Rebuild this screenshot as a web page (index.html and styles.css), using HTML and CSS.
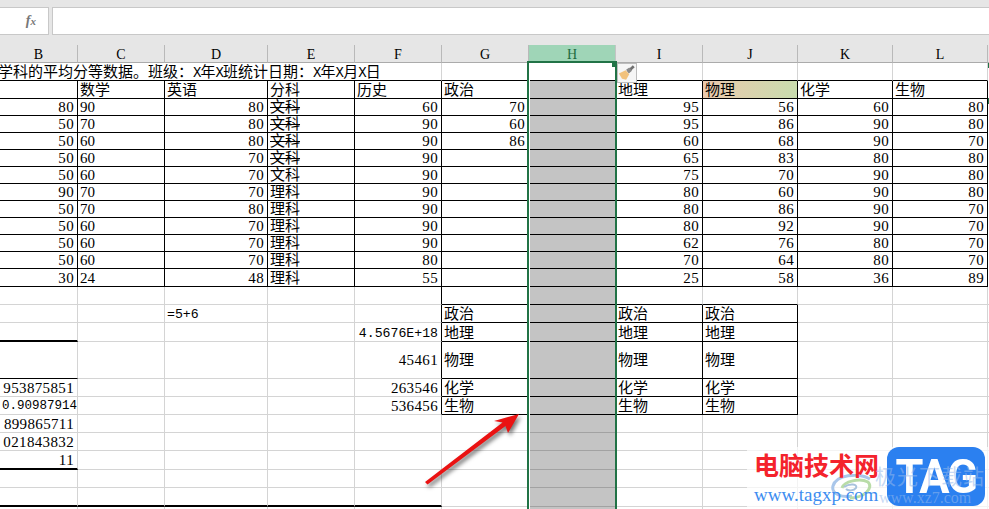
FILE: index.html
```html
<!DOCTYPE html>
<html lang="zh-CN">
<head>
<meta charset="utf-8">
<title>表格</title>
<link rel="stylesheet" href="styles.css">
</head>
<body>
<div class="app">
  <div class="formula-bar">
    <div class="fx-box"><span class="fx">f<span class="fx-x">x</span></span></div>
    <div class="formula-input"></div>
  </div>
  <div class="sheet">
    <table class="grid">
      <colgroup>
        <col class="c78"><col class="c87"><col class="c103"><col class="c87"><col class="c87"><col class="c87"><col class="c87"><col class="c87"><col class="c95"><col class="c95"><col class="c95"><col class="c100">
      </colgroup>
      <thead>
        <tr><th>B</th><th>C</th><th>D</th><th>E</th><th>F</th><th>G</th><th class="on">H</th><th>I</th><th>J</th><th>K</th><th>L</th><th></th></tr>
      </thead>
      <tbody>
        <tr class="h18"><td colspan="5" class="title kb">学科的平均分等数据。班级：<span class="lat">X</span>年<span class="lat">X</span>班统计日期：<span class="lat">X</span>年<span class="lat">X</span>月<span class="lat">X</span>日</td><td class="kb"></td><td class="kb active"></td><td class="kb"></td><td class="kb"></td><td class="kb"></td><td class="kb"></td><td class="end"></td></tr>
        <tr class="h18 rd"><td></td><td>数学</td><td>英语</td><td>分科</td><td>历史</td><td>政治</td><td class="sel"></td><td>地理</td><td class="grad">物理</td><td>化学</td><td>生物</td><td class="end"></td></tr>
        <tr class="h17 rd"><td class="n">80</td><td>90</td><td class="n">80</td><td class="s">文科</td><td class="n">60</td><td class="n">70</td><td class="sel"></td><td class="n">95</td><td class="n">56</td><td class="n">60</td><td class="n">80</td><td class="end"></td></tr>
        <tr class="h17 rd"><td class="n">50</td><td>70</td><td class="n">80</td><td class="s">文科</td><td class="n">90</td><td class="n">60</td><td class="sel"></td><td class="n">95</td><td class="n">86</td><td class="n">90</td><td class="n">80</td><td class="end"></td></tr>
        <tr class="h17 rd"><td class="n">50</td><td>60</td><td class="n">80</td><td class="s">文科</td><td class="n">90</td><td class="n">86</td><td class="sel"></td><td class="n">60</td><td class="n">68</td><td class="n">90</td><td class="n">70</td><td class="end"></td></tr>
        <tr class="h17 rd"><td class="n">50</td><td>60</td><td class="n">70</td><td class="s">文科</td><td class="n">90</td><td></td><td class="sel"></td><td class="n">65</td><td class="n">83</td><td class="n">80</td><td class="n">80</td><td class="end"></td></tr>
        <tr class="h17 rd"><td class="n">50</td><td>60</td><td class="n">70</td><td>文科</td><td class="n">90</td><td></td><td class="sel"></td><td class="n">75</td><td class="n">70</td><td class="n">90</td><td class="n">80</td><td class="end"></td></tr>
        <tr class="h17 rd"><td class="n">90</td><td>70</td><td class="n">70</td><td>理科</td><td class="n">90</td><td></td><td class="sel"></td><td class="n">80</td><td class="n">60</td><td class="n">90</td><td class="n">80</td><td class="end"></td></tr>
        <tr class="h17 rd"><td class="n">50</td><td>70</td><td class="n">80</td><td>理科</td><td class="n">90</td><td></td><td class="sel"></td><td class="n">80</td><td class="n">86</td><td class="n">90</td><td class="n">70</td><td class="end"></td></tr>
        <tr class="h17 rd"><td class="n">50</td><td>60</td><td class="n">70</td><td>理科</td><td class="n">90</td><td></td><td class="sel"></td><td class="n">80</td><td class="n">92</td><td class="n">90</td><td class="n">70</td><td class="end"></td></tr>
        <tr class="h17 rd"><td class="n">50</td><td>60</td><td class="n">70</td><td>理科</td><td class="n">90</td><td></td><td class="sel"></td><td class="n">62</td><td class="n">76</td><td class="n">80</td><td class="n">70</td><td class="end"></td></tr>
        <tr class="h17 rd"><td class="n">50</td><td>60</td><td class="n">70</td><td>理科</td><td class="n">80</td><td></td><td class="sel"></td><td class="n">70</td><td class="n">64</td><td class="n">80</td><td class="n">70</td><td class="end"></td></tr>
        <tr class="h18 rd"><td class="n">30</td><td>24</td><td class="n">48</td><td>理科</td><td class="n">55</td><td></td><td class="sel"></td><td class="n">25</td><td class="n">58</td><td class="n">36</td><td class="n">89</td><td class="end"></td></tr>
        <tr class="h18"><td></td><td></td><td></td><td></td><td class="kr"></td><td class="kb kr"></td><td class="sel kb"></td><td class="kb"></td><td class="kb"></td><td></td><td></td><td></td></tr>
        <tr class="h18"><td></td><td></td><td class="m">=5+6</td><td></td><td class="kr"></td><td class="k">政治</td><td class="sel kb"></td><td class="k">政治</td><td class="k">政治</td><td></td><td></td><td></td></tr>
        <tr class="h19"><td class="thick"></td><td></td><td></td><td></td><td class="kr n m">4.5676E+18</td><td class="k">地理</td><td class="sel kb"></td><td class="k">地理</td><td class="k">地理</td><td></td><td></td><td></td></tr>
        <tr class="h37"><td class="kb"></td><td></td><td></td><td></td><td class="kr n">45461</td><td class="k">物理</td><td class="sel kb"></td><td class="k">物理</td><td class="k">物理</td><td></td><td></td><td></td></tr>
        <tr class="h18"><td class="n">953875851</td><td></td><td></td><td></td><td class="kr n">263546</td><td class="k">化学</td><td class="sel kb"></td><td class="k">化学</td><td class="k">化学</td><td></td><td></td><td></td></tr>
        <tr class="h18"><td class="n m tight">0.90987914</td><td></td><td></td><td></td><td class="kr n">536456</td><td class="k">生物</td><td class="sel kb"></td><td class="k">生物</td><td class="k">生物</td><td></td><td></td><td></td></tr>
        <tr class="h18"><td class="n">899865711</td><td></td><td></td><td></td><td></td><td></td><td class="sel"></td><td></td><td></td><td></td><td></td><td></td></tr>
        <tr class="h18"><td class="n">021843832</td><td></td><td></td><td></td><td></td><td></td><td class="sel"></td><td></td><td></td><td></td><td></td><td></td></tr>
        <tr class="h19"><td class="n thick">11</td><td></td><td></td><td></td><td></td><td></td><td class="sel"></td><td></td><td></td><td></td><td></td><td></td></tr>
        <tr class="h18"><td></td><td></td><td></td><td></td><td></td><td></td><td class="sel"></td><td></td><td></td><td></td><td></td><td></td></tr>
        <tr class="h19"><td class="thick"></td><td class="thick"></td><td class="thick"></td><td class="thick"></td><td class="thick"></td><td></td><td class="sel"></td><td></td><td></td><td></td><td></td><td></td></tr>
        <tr class="h18"><td></td><td></td><td></td><td></td><td></td><td></td><td class="sel"></td><td></td><td></td><td></td><td></td><td></td></tr>
      </tbody>
    </table>

    <div class="selection"><span class="handle"></span></div>
    <span class="tick tick-a"></span>
    <span class="tick tick-b"></span>

    <div class="paint-tag">
      <svg viewBox="0 0 20 20" width="18" height="18">
        <path class="brush-handle" d="M17.5 2.5 L11 8.5"/>
        <path class="brush-neck" d="M9 6.5 L12.5 3.8 L15.5 7.5 L12 10.5 Z"/>
        <path class="brush-head" d="M1 10.5 L8.5 7 L12.5 11.5 L9 17.5 L4.5 16.5 Z"/>
      </svg>
    </div>

    <svg class="arrow" viewBox="0 0 100 80" width="100" height="80">
      <path class="arrow-fill" d="M3.5 70.5 L1 68 L78.5 8.5 L70 7 L95 0 L84 19 L81.5 12 Z"/>
    </svg>

    <div class="watermark">
      <div class="wm-faint">极光下载站</div>
      <div class="wm-faint-url">www.xz7.com</div>
      <svg class="wm-swirl" viewBox="0 0 44 26" width="44" height="26">
        <path class="swirl-a" d="M40 5 C28 -2 6 1 3 12 C1 20 12 24 22 22"/>
        <path class="swirl-b" d="M12 14 C14 7 30 4 38 8 C44 14 34 24 20 24"/>
        <path class="swirl-c" d="M14 13 C20 9 28 10 26 14 C24 17 18 17 16 15"/>
      </svg>
      <div class="wm-text">
        <div class="wm-cn">电脑技术网</div>
        <div class="wm-url">www.tagxp.com</div>
      </div>
      <div class="wm-badge"><span class="wm-tag">TAG</span></div>
    </div>
  </div>
</div>
</body>
</html>
```
FILE: styles.css
```css
* { box-sizing: border-box; }
html, body { margin: 0; padding: 0; height: 100%; }
body { background: #e6e6e6; overflow: hidden; }
.app { width: 989px; height: 509px; display: flex; flex-direction: column; overflow: hidden; font-family: "Liberation Serif", "Noto Sans CJK SC", serif; font-size: 15px; color: #000; }

.formula-bar { display: flex; gap: 3px; padding-top: 7px; height: 45px; flex: none; }
.fx-box, .formula-input { height: 28px; background: #fff; border: 1px solid #c8c8c8; }
.fx-box { width: 49px; border-left: 0; display: flex; align-items: center; justify-content: flex-end; padding-right: 12px; }
.formula-input { flex: 1; border-right: 0; }
.fx { font: italic bold 14px "Liberation Serif", serif; color: #777; }
.fx-x { font-size: 11px; }

.sheet { position: relative; flex: 1; overflow: hidden; background: #fff; }
.grid { border-collapse: separate; border-spacing: 0; table-layout: fixed; width: 1088px; }
.c78 { width: 78px; } .c87 { width: 87px; } .c103 { width: 103px; } .c95 { width: 95px; } .c100 { width: 100px; }

th { height: 18px; padding: 2px 0 0; background: #e6e6e6; border-right: 1px solid #b9b9b9; border-bottom: 1px solid #ababab; font-weight: 400; font-size: 14px; line-height: 15px; text-align: center; vertical-align: middle; }
th.on { background: #9fd5b7; color: #1d6b40; border-right-color: #c4c4c4; }

td { padding: 0 2px 0 2px; border-right: 1px solid #d4d4d4; border-bottom: 1px solid #d4d4d4; line-height: 15px; white-space: nowrap; overflow: hidden; vertical-align: bottom; background: #fff; }
tr.h17 td { height: 17px; }
tr.h18 td { height: 18px; }
tr.h19 td { height: 19px; }
tr.h37 td { height: 37px; vertical-align: middle; }

tr.rd td { border-color: #000; }
td.end, tr.rd td.end { border-color: transparent; }
td.k { border-color: #000; }
td.kb { border-bottom-color: #000; }
td.kr { border-right-color: #000; }
td.thick { border-bottom: 2px solid #000; }
td.n { text-align: right; padding-right: 3px; letter-spacing: .35px; }
td.m { font-family: "Liberation Mono", monospace; font-size: 13.2px; letter-spacing: 0; }
td.tight { padding-right: 1px; font-size: 12.5px; }
td.s { text-decoration: line-through; }
td.grad { background: linear-gradient(100deg, #ecc9ad, #c8dcae); }
td.title { padding: 0; text-indent: -2px; }
.lat { font-family: "Liberation Mono", monospace; font-size: 14px; line-height: 1; letter-spacing: -.9px; }

td.sel { background: #c4c4c4; border-bottom-color: #a2a2a2; }
td.sel.kb, tr.rd td.sel { border-bottom-color: #000; }
td.active { background: #fff; }

.selection { position: absolute; left: 527px; top: 16px; width: 90px; height: 460px; border: 2px solid #217346; box-shadow: inset 1px 0 0 #fff; pointer-events: none; }
.handle { position: absolute; right: -2px; top: -2px; width: 5px; height: 6px; background: #217346; }
.tick { position: absolute; left: 988px; width: 1px; background: #217346; }
.tick-a { top: 18px; height: 5px; }
.tick-b { top: 53px; height: 6px; }

.paint-tag { position: absolute; left: 617px; top: 18px; width: 20px; height: 20px; background: #f6f6f6; border: 1px solid #bdbdbd; display: flex; align-items: center; justify-content: center; }
.brush-handle { stroke: #707070; stroke-width: 3; fill: none; }
.brush-neck { fill: #8a8a8a; }
.brush-head { fill: #f2c27c; }

.arrow { position: absolute; left: 424px; top: 369px; overflow: visible; filter: drop-shadow(2px 3px 2px rgba(0, 0, 0, .55)); }
.arrow-fill { fill: #ea1212; }

.watermark { position: absolute; left: 747px; top: 402px; width: 242px; height: 62px; display: flex; align-items: flex-start; background: rgba(255, 255, 255, .72); }
.wm-text { margin-left: 7px; width: 133px; padding-top: 4px; position: relative; }
.wm-cn { font: 700 25px/27px "Noto Sans CJK SC", sans-serif; color: #f4232c; white-space: nowrap; }
.wm-url { margin-top: 7px; font: 400 19px/20px "Liberation Serif", serif; color: #3d8df0; white-space: nowrap; }
.wm-badge { position: relative; margin-left: 0; width: 98px; height: 59px; background: #2b80f0; border-radius: 12px; display: flex; align-items: center; justify-content: center; }
.wm-tag { font: 700 49px/1 Roboto, sans-serif; color: #fff; letter-spacing: -2px; transform: scaleX(.92); }
.wm-faint { position: absolute; left: 128px; top: 16px; font: 400 21px/24px "Noto Sans CJK SC", sans-serif; color: rgba(150, 185, 235, .55); white-space: nowrap; z-index: 1; letter-spacing: 1px; }
.wm-faint-url { position: absolute; left: 132px; top: 42px; font: 400 16px/18px "Liberation Serif", serif; color: rgba(150, 185, 235, .55); white-space: nowrap; z-index: 1; }
.wm-swirl { position: absolute; left: 83px; top: 27px; fill: none; }
.swirl-a { stroke: #a9c6ea; stroke-width: 3; }
.swirl-b { stroke: #b9dca8; stroke-width: 3; }
.swirl-c { stroke: #a8c2dc; stroke-width: 2; }
```
